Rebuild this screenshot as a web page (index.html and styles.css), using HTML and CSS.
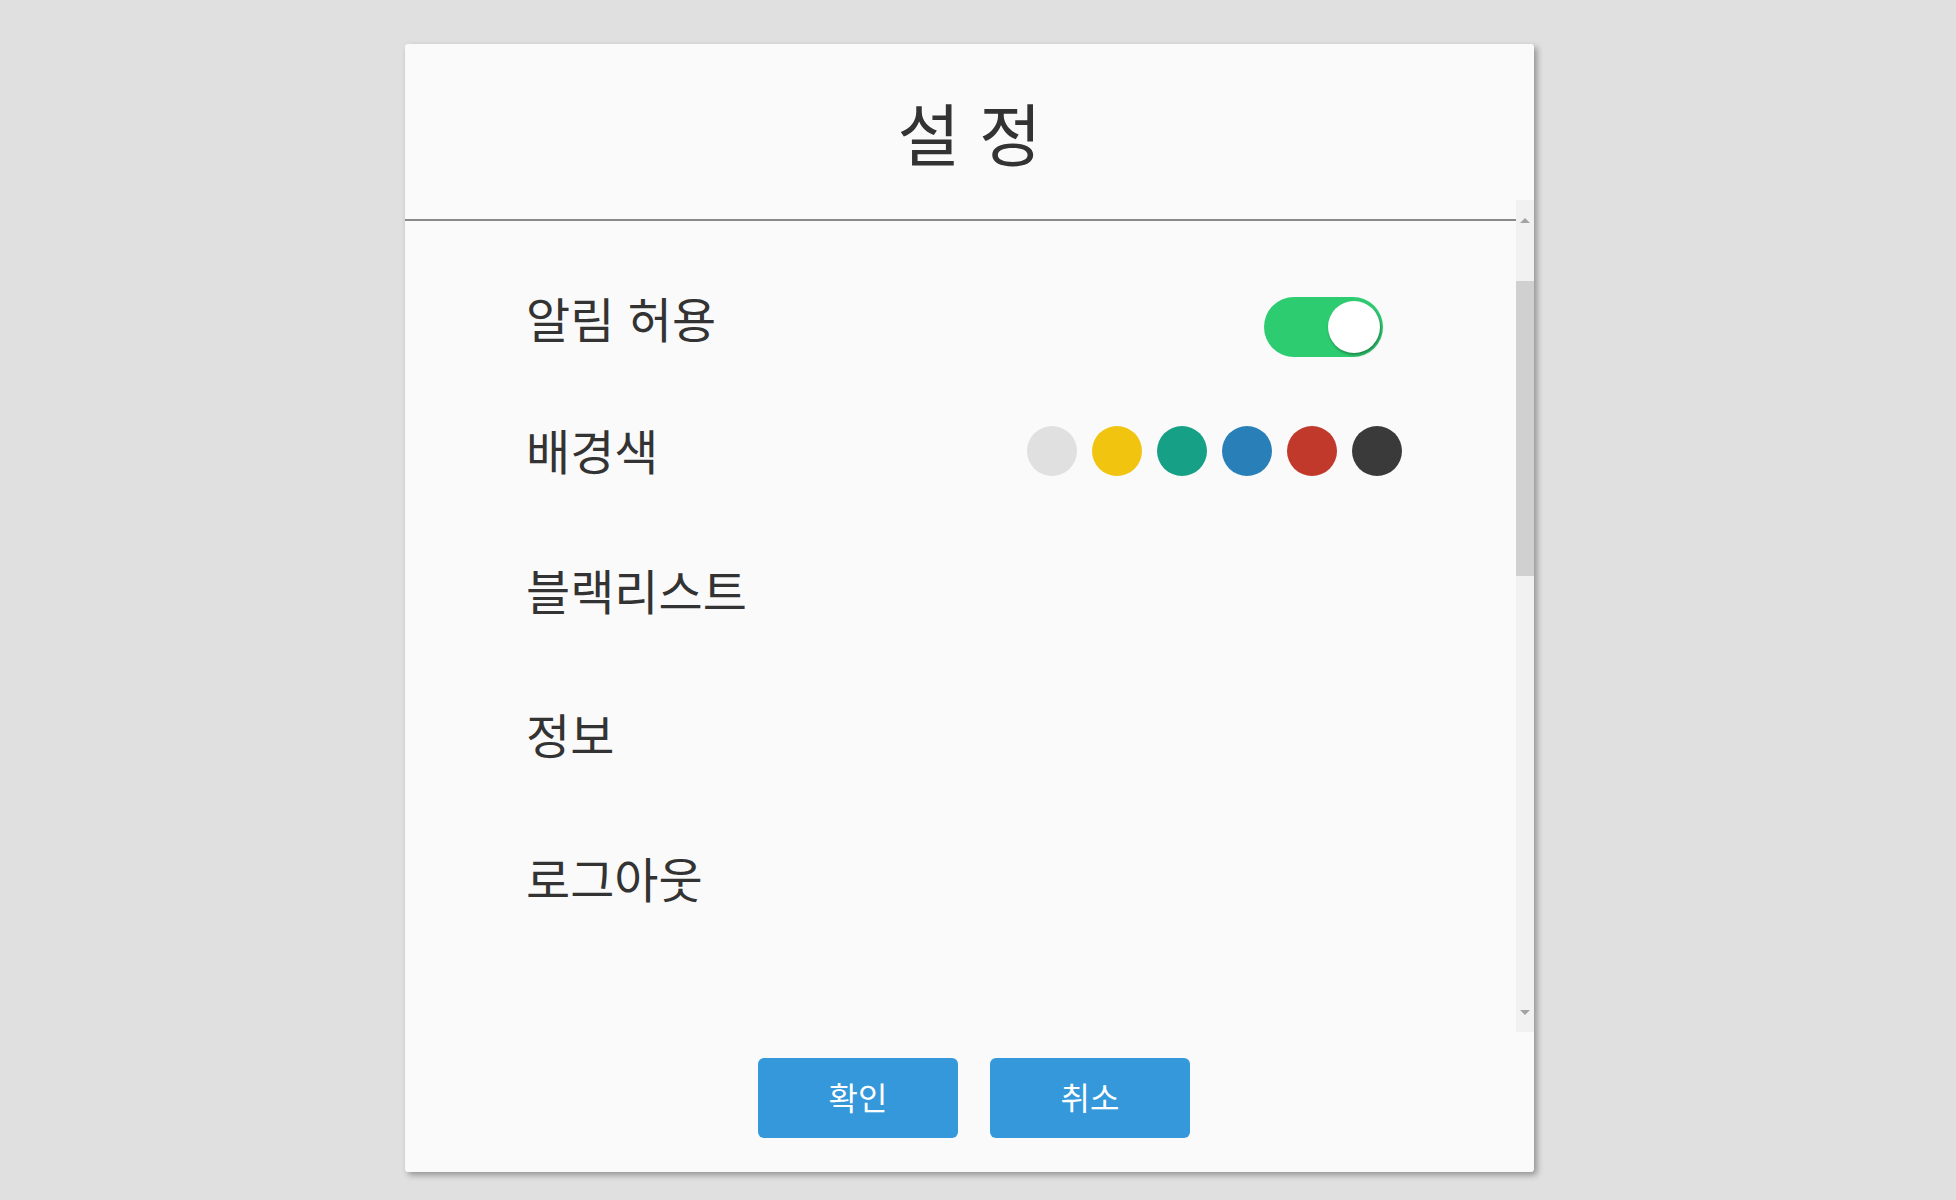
FILE: index.html
```html
<!DOCTYPE html>
<html lang="ko">
<head>
<meta charset="utf-8">
<title>설정</title>
<link rel="stylesheet" href="styles.css">
</head>
<body>
<div class="dialog">
  <header class="dialog-header">
    <h1 class="title">설 정</h1>
  </header>
  <div class="scroll-area">
    <div class="scroll-content">
      <div class="divider"></div>
      <ul class="settings">
        <li class="row row-1">
          <span class="label">알림 허용</span>
          <span class="toggle"><span class="knob"></span></span>
        </li>
        <li class="row row-2">
          <span class="label">배경색</span>
          <span class="swatches">
            <span class="swatch sw-light"></span>
            <span class="swatch sw-yellow"></span>
            <span class="swatch sw-teal"></span>
            <span class="swatch sw-blue"></span>
            <span class="swatch sw-red"></span>
            <span class="swatch sw-dark"></span>
          </span>
        </li>
        <li class="row row-n"><span class="label">블랙리스트</span></li>
        <li class="row row-n"><span class="label">정보</span></li>
        <li class="row row-n"><span class="label">로그아웃</span></li>
      </ul>
    </div>
    <div class="scrollbar">
      <div class="sb-btn"><span class="arrow-up"></span></div>
      <div class="sb-track">
        <div class="sb-thumb"></div>
      </div>
      <div class="sb-btn"><span class="arrow-down"></span></div>
    </div>
  </div>
  <footer class="dialog-footer">
    <button class="btn">확인</button>
    <button class="btn">취소</button>
  </footer>
</div>
</body>
</html>
```

FILE: styles.css
```css
html, body {
  margin: 0;
  padding: 0;
}
body {
  background: #e0e0e0;
  font-family: "Noto Sans CJK KR", "Noto Sans", sans-serif;
  color: #333333;
  height: 1200px;
  overflow: hidden;
}
.dialog {
  box-sizing: border-box;
  width: 1129px;
  height: 1128px;
  margin: 44px 0 0 405px;
  background: #fafafa;
  border-radius: 3px;
  box-shadow: 3px 3px 6px rgba(0, 0, 0, 0.35);
  display: flex;
  flex-direction: column;
}
.dialog-header {
  box-sizing: border-box;
  height: 156px;
  padding-top: 39px;
  text-align: center;
}
.title {
  margin: 0;
  font-size: 68px;
  line-height: 98px;
  font-weight: 400;
  color: #333333;
}
.scroll-area {
  height: 832px;
  display: flex;
}
.scroll-content {
  flex: 1;
  padding-top: 19px;
}
.divider {
  height: 2px;
  background: #8a8a8a;
}
.settings {
  list-style: none;
  margin: 0;
  padding: 32px 114px 0 121px;
}
.row {
  display: flex;
  align-items: center;
  justify-content: space-between;
}
.row-1 { height: 127px; }
.row-2 { height: 137px; }
.row-n { height: 144px; }
.label {
  font-size: 48px;
  line-height: 64px;
  color: #333333;
}
.toggle {
  position: relative;
  width: 119px;
  height: 60px;
  margin: 20px 19px 0 0;
  border-radius: 30px;
  background: #2ecc71;
}
.knob {
  position: absolute;
  top: 4px;
  right: 3px;
  width: 52px;
  height: 52px;
  border-radius: 50%;
  background: #ffffff;
  box-shadow: 1px 2px 3px rgba(0, 0, 0, 0.35);
}
.swatches {
  display: flex;
  gap: 15px;
  margin-top: 5px;
}
.swatch {
  width: 50px;
  height: 50px;
  border-radius: 50%;
}
.sw-light { background: #e0e0e0; }
.sw-yellow { background: #f1c40f; }
.sw-teal { background: #16a085; }
.sw-blue { background: #2980b9; }
.sw-red { background: #c0392b; }
.sw-dark { background: #3a3a3a; }
.scrollbar {
  width: 18px;
  background: #f1f1f1;
  display: flex;
  flex-direction: column;
}
.sb-btn {
  height: 40px;
  display: flex;
  align-items: center;
  justify-content: center;
}
.arrow-up {
  width: 0;
  height: 0;
  border-left: 5px solid transparent;
  border-right: 5px solid transparent;
  border-bottom: 5px solid #a3a3a3;
}
.arrow-down {
  width: 0;
  height: 0;
  border-left: 5px solid transparent;
  border-right: 5px solid transparent;
  border-top: 5px solid #a3a3a3;
}
.sb-track {
  flex: 1;
  padding-top: 41px;
}
.sb-thumb {
  height: 295px;
  background: #d0d0d0;
}
.dialog-footer {
  flex: 1;
  display: flex;
  justify-content: center;
  gap: 32px;
  padding: 26px 0 0 9px;
}
.btn {
  width: 200px;
  height: 80px;
  border: none;
  border-radius: 6px;
  background: #3498db;
  color: #ffffff;
  font-family: "Noto Sans CJK KR", "Noto Sans", sans-serif;
  font-size: 32px;
  padding: 0 0 4px 0;
}
```
